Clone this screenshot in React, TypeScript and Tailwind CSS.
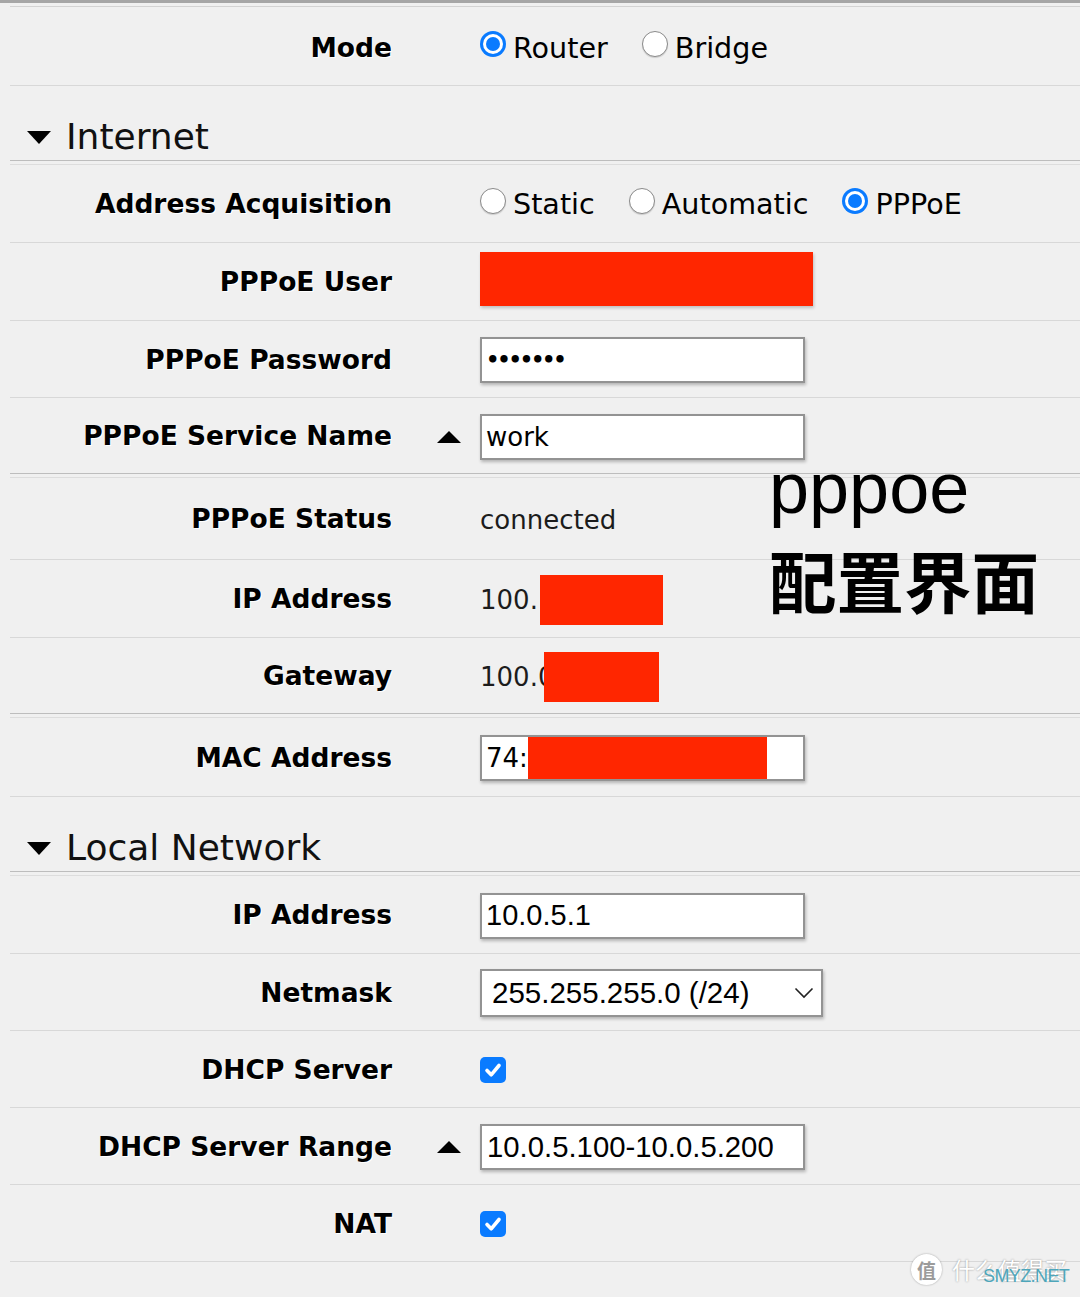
import React from "react";

const LABEL =
  "w-[382px] shrink-0 text-right font-bold text-[26.5px] leading-none text-black [text-shadow:1px_1px_0_#ffffff] font-['DejaVu_Sans','Verdana',sans-serif]";
const VALUE = "text-[26px] leading-none text-[#1c1c1c] font-['DejaVu_Sans','Verdana',sans-serif]";
const INPUT =
  "relative w-[325px] h-[46px] bg-white border-2 border-[#939393] shadow-[1px_2px_3px_rgba(0,0,0,0.25)] flex items-center overflow-hidden";

function UpTri() {
  return (
    <svg width="24" height="12" viewBox="0 0 24 12">
      <polygon points="0,12 12,0 24,12" fill="#000" />
    </svg>
  );
}

function DownTri() {
  return (
    <svg width="24" height="13" viewBox="0 0 24 13">
      <polygon points="0,0 24,0 12,13" fill="#000" />
    </svg>
  );
}

function Row({
  label,
  h,
  sep,
  arrow,
  children,
}: {
  label: string;
  h: string;
  sep?: boolean;
  arrow?: boolean;
  children?: React.ReactNode;
}) {
  return (
    <div className={`flex items-center pt-[2px] ${h} ${sep ? "" : "border-b border-[#d8d8d8]"}`}>
      <div className={LABEL}>{label}</div>
      <div className="w-[88px] shrink-0 flex justify-end pr-[19px]">{arrow ? <UpTri /> : null}</div>
      <div className="flex items-center">{children}</div>
    </div>
  );
}

function Sep() {
  return <div className="h-[5px] border-t border-b border-t-[#bdbdbd] border-b-[#dddddd]" />;
}

function Heading({ title, h }: { title: string; h: string }) {
  return (
    <div className={`flex items-end ${h} pb-[5px]`}>
      <div className="h-[36px] ml-[17px] flex items-center">
        <DownTri />
      </div>
      <span className="ml-[15px] text-[36px] leading-[36px] text-[#111] font-['DejaVu_Sans','Verdana',sans-serif]">
        {title}
      </span>
    </div>
  );
}

function Radio({ checked, label }: { checked?: boolean; label: string }) {
  return (
    <div className="flex items-center">
      {checked ? (
        <div className="w-[26px] h-[26px] mb-[8px] rounded-full bg-[#0a7bff] p-[3px]">
          <div className="w-full h-full rounded-full bg-white p-[3px]">
            <div className="w-full h-full rounded-full bg-[#0a7bff]" />
          </div>
        </div>
      ) : (
        <div className="w-[26px] h-[26px] mb-[8px] rounded-full bg-white border-[1.5px] border-[#8a8a8a] shadow-[0_1px_1px_rgba(0,0,0,0.15)]" />
      )}
      <span className="ml-[7px] text-[28.6px] leading-none text-black font-['DejaVu_Sans','Verdana',sans-serif]">
        {label}
      </span>
    </div>
  );
}

function Check() {
  return (
    <div className="w-[26px] h-[26px] rounded-[5px] bg-[#0a7bff] flex items-center justify-center">
      <svg width="26" height="26" viewBox="0 0 26 26">
        <path
          d="M7 13.5 L11.2 17.8 L19 8.5"
          stroke="#fff"
          strokeWidth="3.6"
          fill="none"
          strokeLinecap="round"
          strokeLinejoin="round"
        />
      </svg>
    </div>
  );
}

export default function App() {
  return (
    <div className="relative w-[1080px] min-h-[1297px] bg-[#f0f0f0] overflow-hidden">
      <div className="h-[9px] border-t-[3px] border-[#a6a6a6]">
        <div className="ml-[10px] mt-[3px] border-t border-[#d3d3d3]" />
      </div>
      <div className="pl-[10px]">
        <Row label="Mode" h="h-[77px]">
          <div className="flex items-center gap-[34px]">
            <Radio checked label="Router" />
            <Radio label="Bridge" />
          </div>
        </Row>
        <Heading title="Internet" h="h-[74px]" />
        <Sep />
        <Row label="Address Acquisition" h="h-[78px]">
          <div className="flex items-center gap-[34px]">
            <Radio label="Static" />
            <Radio label="Automatic" />
            <Radio checked label="PPPoE" />
          </div>
        </Row>
        <Row label="PPPoE User" h="h-[78px]">
          <div className="w-[333px] h-[54px] mb-[8px] bg-[#ff2600] shadow-[1px_2px_3px_rgba(0,0,0,0.2)]" />
        </Row>
        <Row label="PPPoE Password" h="h-[77px]">
          <div className={INPUT}>
            <span className="pl-[4px] text-[21px] leading-none tracking-[-2.2px] font-bold text-black font-['DejaVu_Sans',sans-serif]">
              •••••••
            </span>
          </div>
        </Row>
        <Row label="PPPoE Service Name" h="h-[75px]" sep arrow>
          <div className={INPUT}>
            <span className={`pl-[4px] ${VALUE} text-black`}>work</span>
          </div>
        </Row>
        <Sep />
        <Row label="PPPoE Status" h="h-[82px]">
          <span className={VALUE}>connected</span>
        </Row>
        <Row label="IP Address" h="h-[78px]">
          <div className="flex items-center">
            <span className={VALUE}>100.</span>
            <div className="ml-[2px] w-[123px] h-[50px] bg-[#ff2600]" />
          </div>
        </Row>
        <Row label="Gateway" h="h-[75px]" sep>
          <div className="relative flex items-center h-[50px]">
            <span className={VALUE}>100.0</span>
            <div className="absolute left-[64px] top-0 w-[115px] h-[50px] bg-[#ff2600]" />
          </div>
        </Row>
        <Sep />
        <Row label="MAC Address" h="h-[79px]">
          <div className={INPUT}>
            <span className={`pl-[4px] ${VALUE} text-black`}>74:</span>
            <div className="absolute left-[46px] top-0 bottom-0 w-[239px] bg-[#ff2600]" />
          </div>
        </Row>
        <Heading title="Local Network" h="h-[74px]" />
        <Sep />
        <Row label="IP Address" h="h-[78px]">
          <div className={INPUT}>
            <span className="pl-[4px] text-[29px] leading-none text-black font-['Liberation_Sans','Arial',sans-serif]">
              10.0.5.1
            </span>
          </div>
        </Row>
        <Row label="Netmask" h="h-[77px]">
          <div className="w-[343px] h-[48px] bg-white border-2 border-[#939393] shadow-[1px_2px_3px_rgba(0,0,0,0.25)] flex items-center justify-between pl-[10px] pr-[7px]">
            <span className="text-[29.5px] leading-none text-black font-['Liberation_Sans','Arial',sans-serif]">
              255.255.255.0 (/24)
            </span>
            <svg width="20" height="12" viewBox="0 0 20 12">
              <path d="M1.5 1.5 L10 10 L18.5 1.5" stroke="#222" strokeWidth="1.6" fill="none" />
            </svg>
          </div>
        </Row>
        <Row label="DHCP Server" h="h-[77px]">
          <Check />
        </Row>
        <Row label="DHCP Server Range" h="h-[77px]" arrow>
          <div className={INPUT}>
            <span className="pl-[5px] text-[29.3px] leading-none text-black font-['Liberation_Sans','Arial',sans-serif]">
              10.0.5.100-10.0.5.200
            </span>
          </div>
        </Row>
        <Row label="NAT" h="h-[77px]">
          <Check />
        </Row>
      </div>

      {/* annotation overlay */}
      <div className="absolute left-[769px] top-[452px] flex flex-col">
        <span className="text-[72px] leading-[72px] text-black font-['Liberation_Sans','Arial',sans-serif]">pppoe</span>
        <span className="mt-[22px] text-[67.5px] leading-[66px] font-bold text-black font-['Noto_Sans_CJK_SC',sans-serif]">
          配置界面
        </span>
      </div>

      {/* watermark */}
      <div className="absolute left-[911px] top-[1254px] flex items-center">
        <div className="w-[31px] h-[31px] rounded-full bg-white shadow-[0_0_2px_rgba(0,0,0,0.35)] flex items-center justify-center">
          <span className="text-[19px] leading-none text-[#9b9b9b] font-bold font-['Noto_Sans_CJK_SC',sans-serif]">值</span>
        </div>
        <span className="ml-[10px] text-[23px] leading-none text-white [text-shadow:0_0_2px_#8a8a8a] font-['Noto_Sans_CJK_SC',sans-serif]">
          什么值得买
        </span>
      </div>
      <span className="absolute left-[983px] top-[1267px] text-[18px] leading-none tracking-[-0.6px] text-[#4ea6ba] font-['Liberation_Sans','Arial',sans-serif]">
        SMYZ.NET
      </span>
    </div>
  );
}
